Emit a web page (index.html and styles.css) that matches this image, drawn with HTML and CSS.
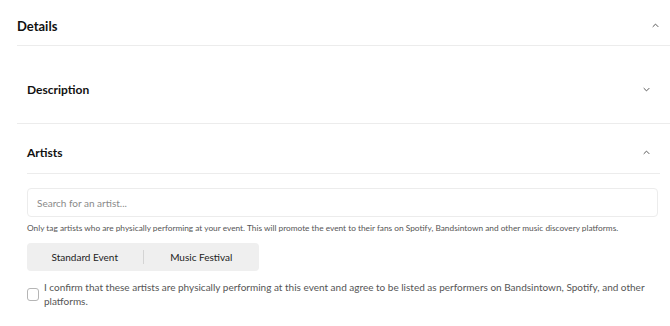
FILE: index.html
```html
<!DOCTYPE html>
<html lang="en">

<head>
  <meta charset="UTF-8" />
  <meta name="viewport" content="width=device-width, initial-scale=1.0" />
  <title>Event Details</title>
  <link rel="stylesheet" href="styles.css">
</head>

<body>
  <div class="details">
    <div class="section-head outer">
      <h2>Details</h2>
      <svg class="chevron" viewBox="0 0 10 6"><path d="M1 5L5 1L9 5" /></svg>
    </div>

    <div class="panel">
      <div class="section-head">
        <h3>Description</h3>
        <svg class="chevron" viewBox="0 0 10 6"><path d="M1 1L5 5L9 1" /></svg>
      </div>
    </div>

    <div class="panel open">
      <div class="section-head">
        <h3>Artists</h3>
        <svg class="chevron" viewBox="0 0 10 6"><path d="M1 5L5 1L9 5" /></svg>
      </div>
      <div class="panel-body">
        <input type="text" class="search" placeholder="Search for an artist..." />
        <p class="hint">Only tag artists who are physically performing at your event. This will promote the event to their fans on Spotify, Bandsintown and other music discovery platforms.</p>
        <div class="toggle">
          <button>Standard Event</button>
          <span class="divider"></span>
          <button>Music Festival</button>
        </div>
        <label class="confirm">
          <span class="box"></span>
          <span>I confirm that these artists are physically performing at this event and agree to be listed as performers on Bandsintown, Spotify, and other platforms.</span>
        </label>
      </div>
    </div>
  </div>
</body>

</html>
```

FILE: styles.css
```css
body {
  margin: 0;
  font-family: 'Lato', 'Open Sans', sans-serif;
  color: #222;
  background: #fff;
  overflow: hidden;
}

.details {
  margin-left: 17px;
  width: 653px;
}

.section-head {
  display: flex;
  align-items: center;
  justify-content: space-between;
}

.section-head.outer {
  box-sizing: border-box;
  height: 46px;
  padding: 6px 11px 0 0;
  border-bottom: 1px solid #ececec;
}

h2 {
  margin: 0;
  font-size: 13px;
  font-weight: 700;
  color: #111;
}

h3 {
  margin: 0;
  font-size: 12px;
  font-weight: 700;
  color: #111;
}

.chevron {
  width: 7px;
  height: 5px;
  fill: none;
  stroke: #555;
  stroke-width: 1.4;
}

.panel {
  padding: 0 10px;
  border-bottom: 1px solid #ececec;
}

.panel .section-head {
  box-sizing: border-box;
  height: 77px;
  padding: 9px 10px 0 0;
}

.panel.open {
  border-bottom: none;
  padding-right: 10px;
}

.panel.open .section-head {
  height: 50px;
  padding-top: 8px;
  border-bottom: 1px solid #ececec;
}

.panel-body {
  padding-top: 14px;
}

.search {
  display: block;
  box-sizing: border-box;
  width: 631px;
  height: 29px;
  padding: 0 9px;
  border: 1px solid #ececec;
  border-radius: 4px;
  font-family: inherit;
  font-size: 10px;
  color: #333;
}

.search::placeholder {
  color: #8a8a8a;
}

.hint {
  margin: 6px 0 0;
  font-size: 8.3px;
  color: #555;
}

.toggle {
  display: flex;
  align-items: center;
  width: 232px;
  height: 28px;
  margin-top: 10px;
  background: #efefef;
  border-radius: 4px;
}

.toggle button {
  flex: 1;
  height: 100%;
  background: none;
  border: none;
  font-family: inherit;
  font-size: 10px;
  color: #222;
  cursor: pointer;
}

.divider {
  width: 1px;
  height: 14px;
  background: #d4d4d4;
}

.confirm {
  display: flex;
  align-items: center;
  gap: 5px;
  margin-top: 9px;
  font-size: 10px;
  line-height: 14px;
  color: #555;
}

.box {
  flex: none;
  width: 10px;
  height: 11px;
  border: 1px solid #b5b5b5;
  border-radius: 3px;
}
```
